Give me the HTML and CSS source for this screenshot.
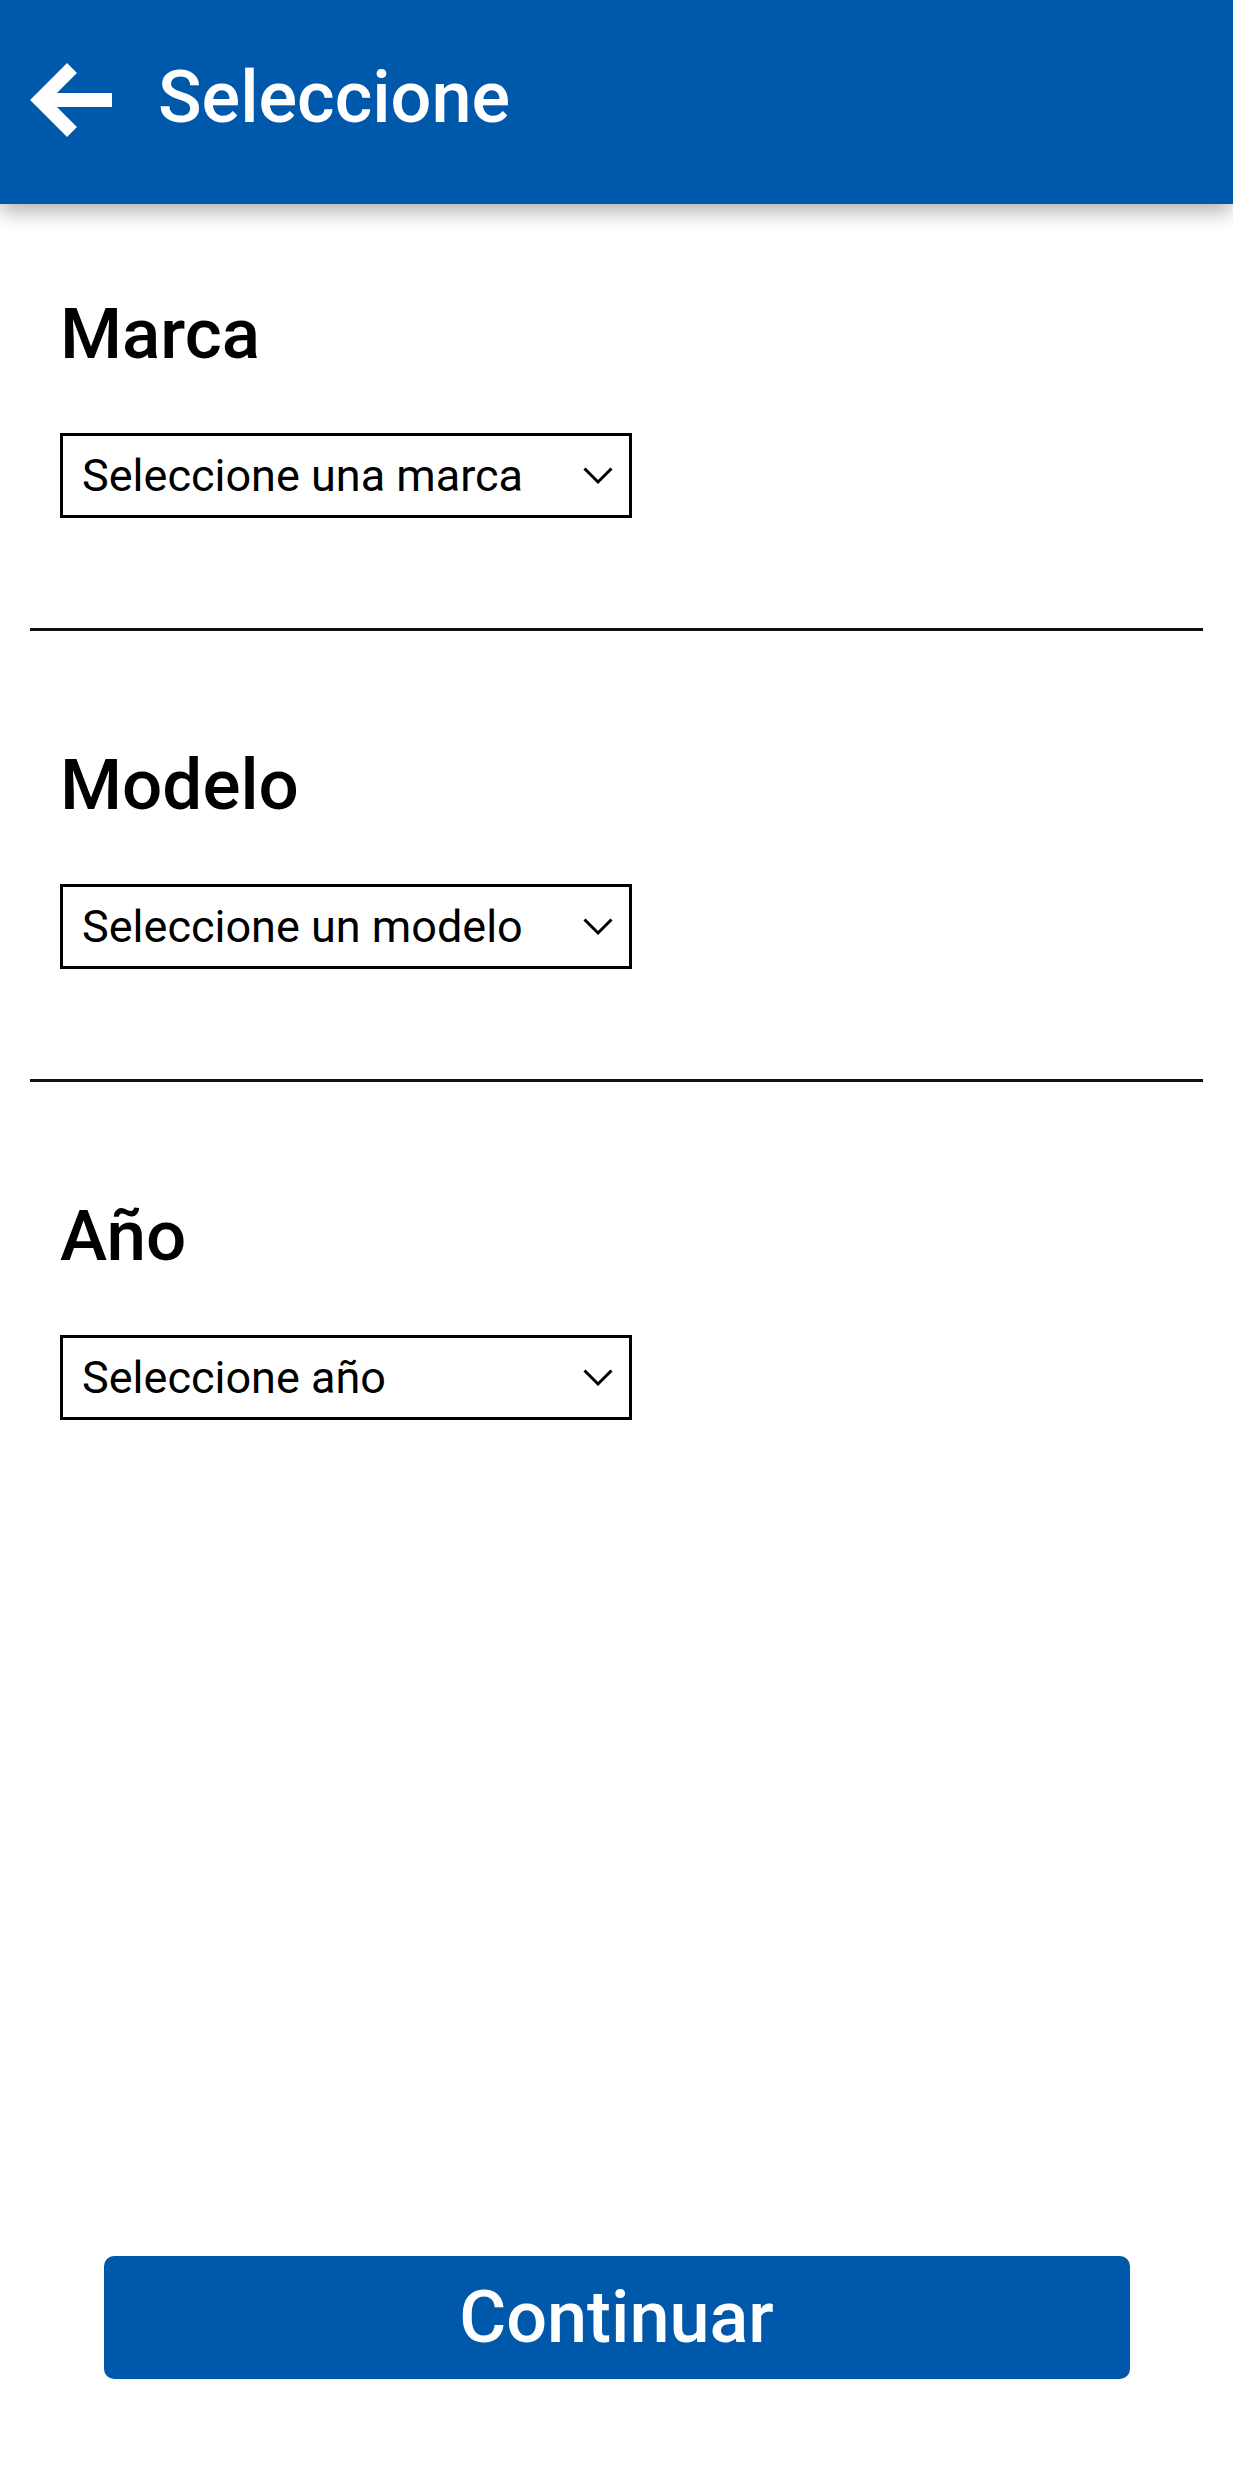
FILE: index.html
```html
<!DOCTYPE html>
<html lang="es">
<head>
<meta charset="utf-8">
<title>Seleccione</title>
<link rel="stylesheet" href="styles.css">
</head>
<body>
<header class="appbar">
  <svg class="back-icon" width="100" height="100" viewBox="20 52 100 100" aria-hidden="true">
    <path d="M72 68 L40 100 L72 132 M40 100 L112 100" fill="none" stroke="#fff" stroke-width="14" stroke-linejoin="miter" stroke-linecap="butt"/>
  </svg>
  <h1 class="appbar-title">Seleccione</h1>
</header>
<main class="form">
  <section class="field">
    <h2 class="field-label">Marca</h2>
    <div class="picker">
      <span class="picker-text">Seleccione una marca</span>
      <svg class="chevron" width="30" height="18" viewBox="0 0 30 18" aria-hidden="true"><polyline points="1.5,1.5 15,15 28.5,1.5" fill="none" stroke="#000" stroke-width="3"/></svg>
    </div>
  </section>
  <section class="field">
    <h2 class="field-label">Modelo</h2>
    <div class="picker">
      <span class="picker-text">Seleccione un modelo</span>
      <svg class="chevron" width="30" height="18" viewBox="0 0 30 18" aria-hidden="true"><polyline points="1.5,1.5 15,15 28.5,1.5" fill="none" stroke="#000" stroke-width="3"/></svg>
    </div>
  </section>
  <section class="field">
    <h2 class="field-label">Año</h2>
    <div class="picker">
      <span class="picker-text">Seleccione año</span>
      <svg class="chevron" width="30" height="18" viewBox="0 0 30 18" aria-hidden="true"><polyline points="1.5,1.5 15,15 28.5,1.5" fill="none" stroke="#000" stroke-width="3"/></svg>
    </div>
  </section>
</main>
<footer class="actions">
  <button class="primary-btn" type="button">Continuar</button>
</footer>
</body>
</html>
```

FILE: styles.css
```css
html, body {
  margin: 0;
  padding: 0;
}

body {
  font-family: Roboto, "Noto Sans", "Liberation Sans", sans-serif;
  color: #000;
  background: #fff;
  display: flex;
  flex-direction: column;
  min-height: 100vh;
}

.appbar {
  position: relative;
  z-index: 1;
  height: 204px;
  box-sizing: border-box;
  background: #0058aa;
  display: flex;
  align-items: flex-start;
  padding: 52px 0 0 20px;
  box-shadow: 0 7px 20px rgba(0, 0, 0, 0.32);
}

.back-icon {
  display: block;
  flex: none;
}

.appbar-title {
  margin: 4px 0 0 38px;
  font-size: 72px;
  line-height: 84px;
  font-weight: 500;
  color: #fff;
}

.form {
  padding: 0 30px;
}

.field {
  padding: 113px 30px 110px;
  border-bottom: 3px solid #111;
}

.field:first-child {
  padding-top: 89px;
}

.field:last-child {
  border-bottom: none;
  padding-bottom: 0;
}

.field-label {
  margin: 0;
  font-size: 71px;
  line-height: 82px;
  font-weight: 500;
}

.picker {
  margin-top: 58px;
  width: 572px;
  height: 85px;
  box-sizing: border-box;
  border: 3px solid #000;
  display: flex;
  align-items: center;
  justify-content: space-between;
  padding: 0 16px 0 19px;
}

.picker-text {
  font-size: 45px;
  line-height: 52px;
  font-weight: 400;
}

.chevron {
  display: block;
  flex: none;
}

.actions {
  margin-top: auto;
  padding: 0 0 90px;
  display: flex;
  justify-content: center;
}

.primary-btn {
  width: 1026px;
  height: 123px;
  border: none;
  border-radius: 10px;
  background: #0058aa;
  color: #fff;
  font-family: Roboto, "Noto Sans", "Liberation Sans", sans-serif;
  font-size: 72px;
  font-weight: 500;
  display: flex;
  align-items: center;
  justify-content: center;
  padding: 0;
}
```
